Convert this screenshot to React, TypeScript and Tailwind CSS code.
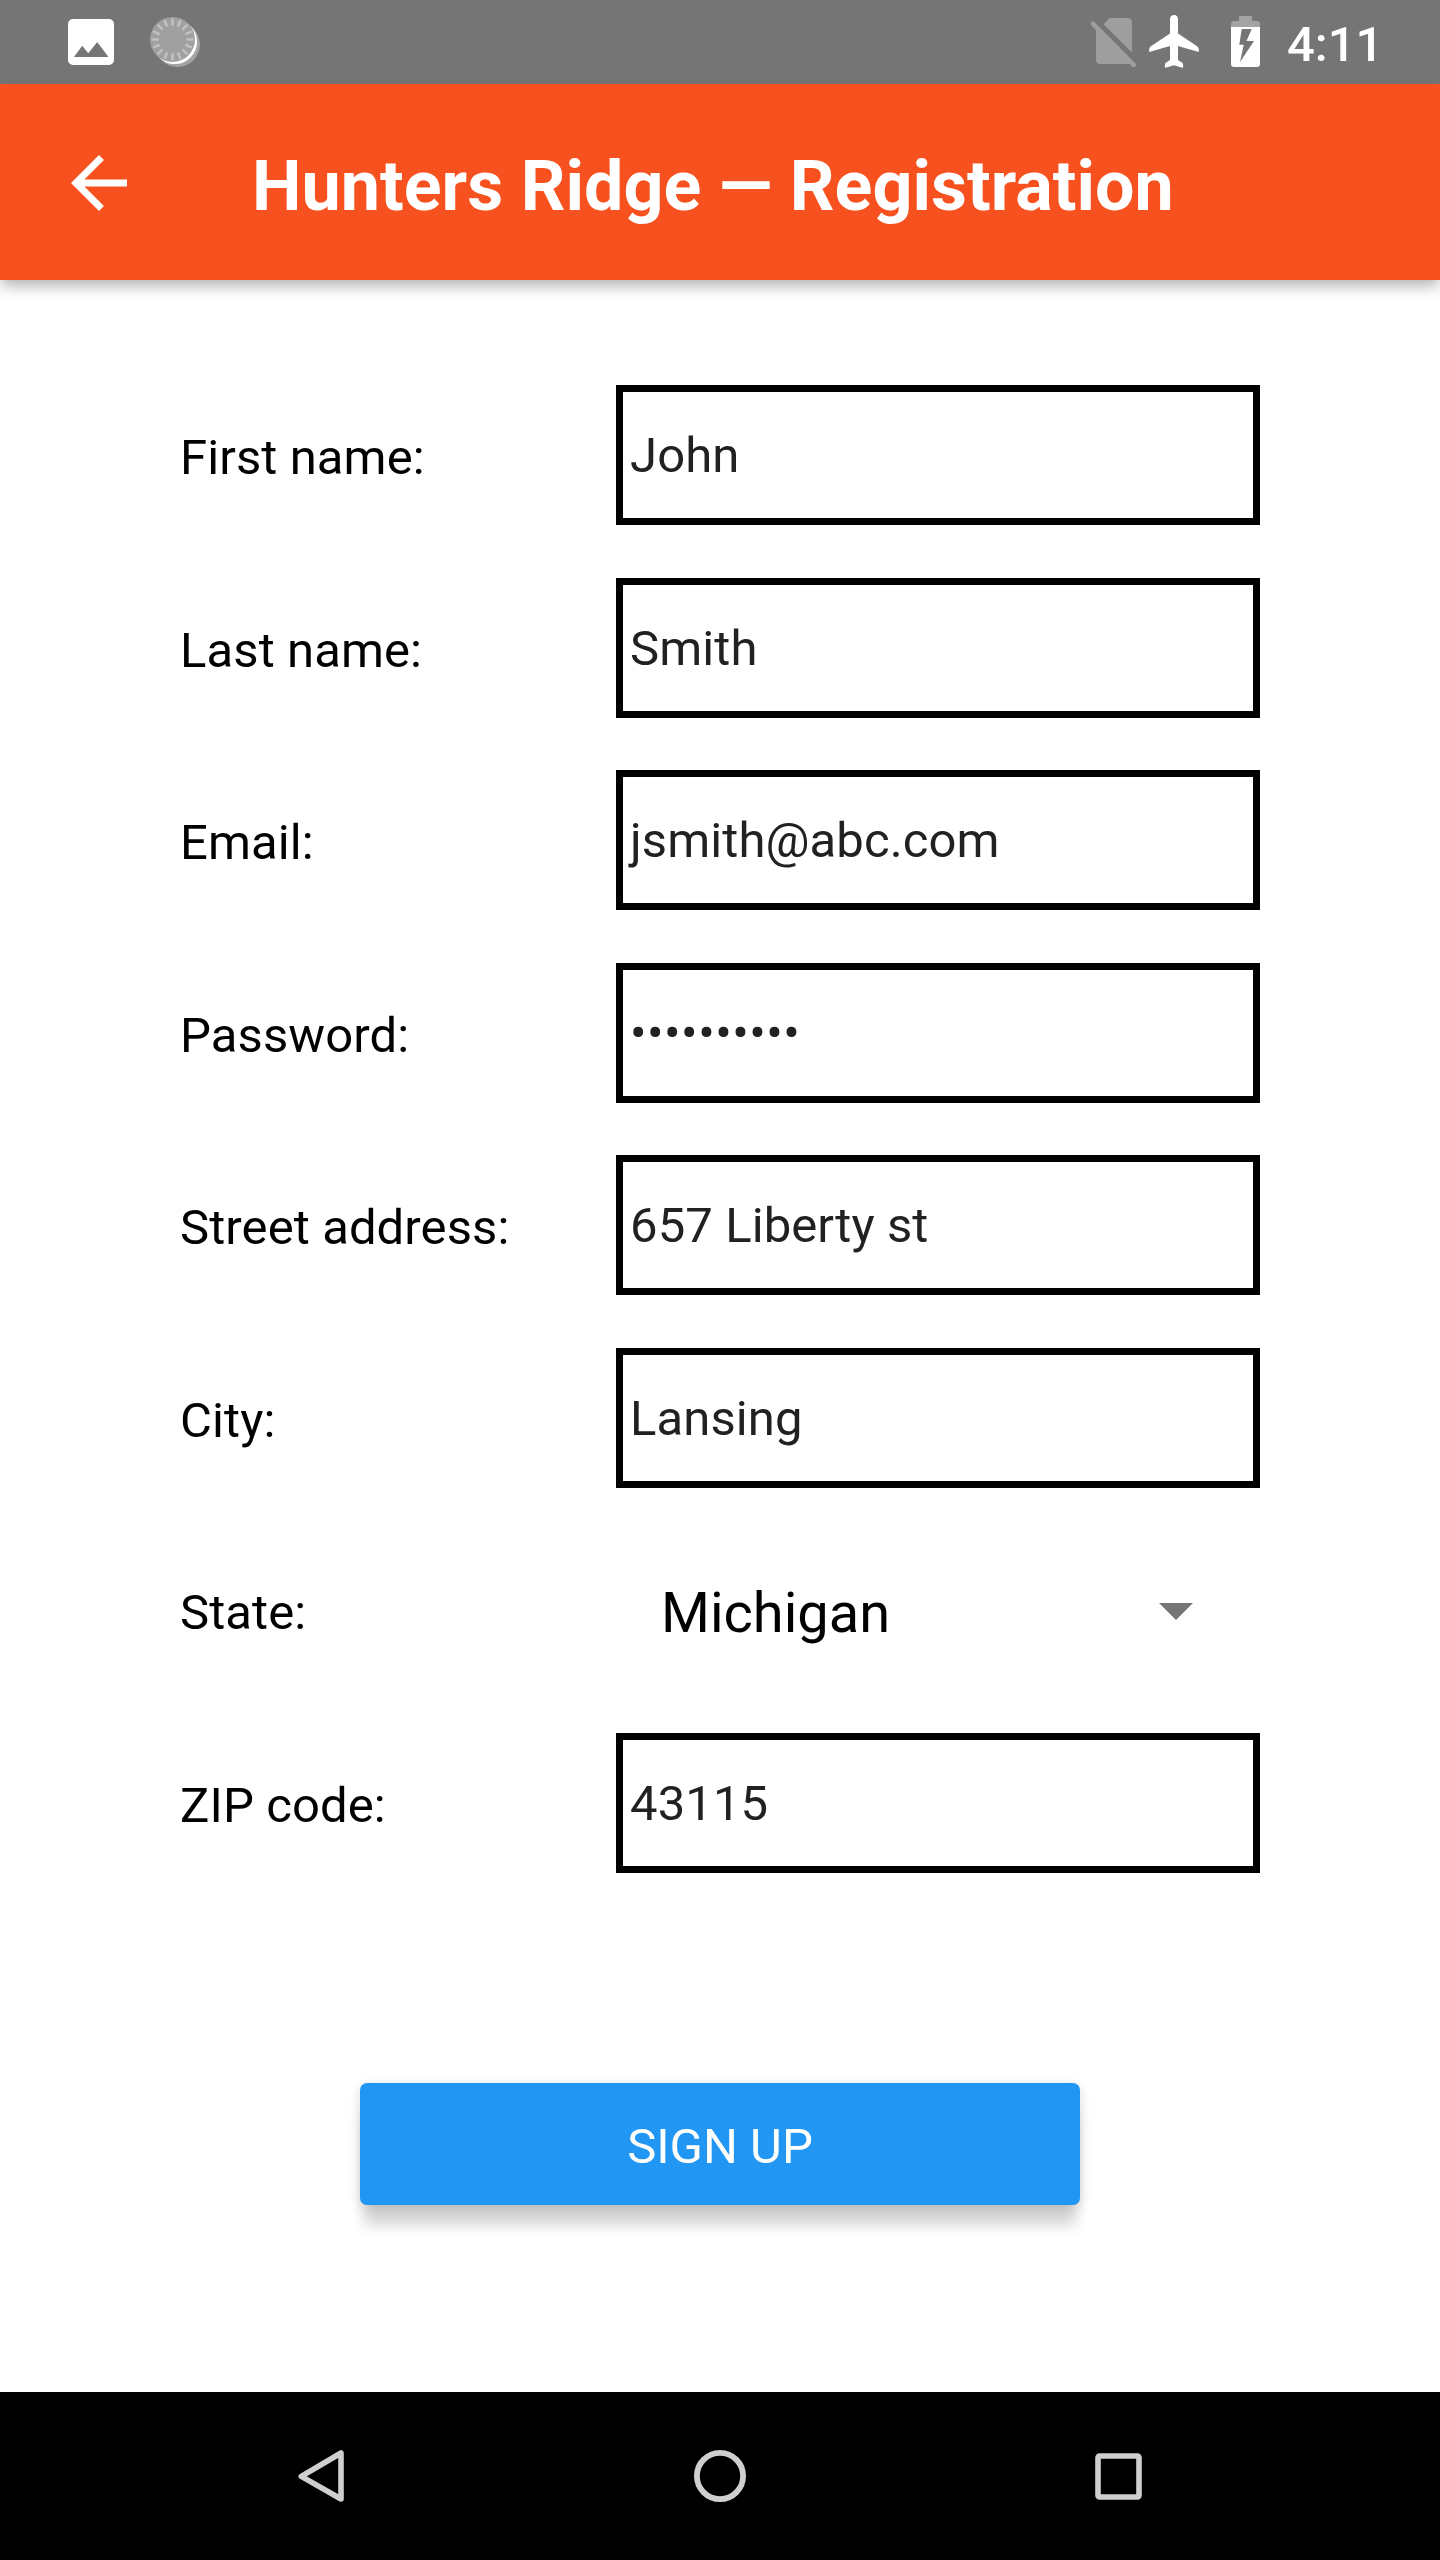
type Field = { label: string; value: string; kind?: 'select' | 'password' };

const fields: Field[] = [
  { label: 'First name:', value: 'John' },
  { label: 'Last name:', value: 'Smith' },
  { label: 'Email:', value: 'jsmith@abc.com' },
  { label: 'Password:', value: '••••••••••', kind: 'password' },
  { label: 'Street address:', value: '657 Liberty st' },
  { label: 'City:', value: 'Lansing' },
  { label: 'State:', value: 'Michigan', kind: 'select' },
  { label: 'ZIP code:', value: '43115' },
];

const spinnerAngles = Array.from({ length: 16 }, (_, i) => i * 22.5);

function StatusBar() {
  return (
    <div className="flex h-[84px] items-center justify-between bg-[#757575] pr-[60px] pl-[68px]">
      <div className="flex items-center">
        <svg className="h-[84px] w-[46px]" viewBox="68 0 46 84">
          <path
            fill="#fff"
            fillRule="evenodd"
            d="M73 19h36a5 5 0 0 1 5 5v36a5 5 0 0 1-5 5H73a5 5 0 0 1-5-5V24a5 5 0 0 1 5-5zM74 57h34.500L97.200 42 88.300 53.300 82.200 45.800z"
          />
        </svg>
        <svg className="ml-9 h-[84px] w-[50px]" viewBox="150 0 50 84">
          <circle cx="177.500" cy="44.500" r="22.500" fill="#a3a3a3" />
          <circle cx="174.800" cy="41.800" r="22.300" fill="#fff" />
          <circle cx="172.500" cy="39.500" r="22.500" fill="#a0a0a0" />
          <g stroke="#c0c0c0" strokeWidth="2.600" strokeLinecap="round">
            {spinnerAngles.map((a) => (
              <line key={a} x1="172.500" y1="19.500" x2="172.500" y2="24.500" transform={`rotate(${a} 172.500 39.500)`} />
            ))}
          </g>
        </svg>
      </div>
      <div className="flex items-center">
        <svg className="h-[84px] w-[46px]" viewBox="1090 0 46 84">
          <g fill="#9e9e9e">
            <path d="M1103.500 24.200 1108 19.400Q1109.300 18 1111 18H1127.500Q1132 18 1132 22.500V52.500Z" />
            <path d="M1096 27.500 1131.500 63Q1130.500 64 1128 64H1100.500Q1096 64 1096 59.500Z" />
          </g>
          <path d="M1093 23.800 1133.700 64.800" stroke="#9e9e9e" strokeWidth="4.600" strokeLinecap="round" />
        </svg>
        <svg className="ml-[13px] h-[84px] w-[50px]" viewBox="1149 0 50 84">
          <path
            fill="#fff"
            d="M1174 15Q1170 15 1170 19.500V33.500L1150.500 46.500Q1149 47.500 1149 51.300Q1149.300 52 1151 51.500L1170 46V60L1165.500 63Q1164.700 63.600 1164.800 67.300Q1165.300 68 1166.500 67.600L1174 65.300 1181.500 67.600Q1182.700 68 1183.200 67.300Q1183.300 63.600 1182.500 63L1178 60V46L1197 51.500Q1198.700 52 1199 51.300Q1199 47.500 1197.500 46.500L1178 33.500V19.500Q1178 15 1174 15Z"
          />
        </svg>
        <svg className="ml-8 h-[84px] w-[29px]" viewBox="1231 0 29 84">
          <path fill="#a3a3a3" d="M1239 16H1252V21H1257Q1260 21 1260 24V27H1231V24Q1231 21 1234 21H1239Z" />
          <path
            fill="#fff"
            fillRule="evenodd"
            d="M1231 27H1260V64Q1260 67 1257 67H1234Q1231 67 1231 64ZM1241.700 29 1239.300 44.800H1243.700L1240 62 1254 41H1246.500L1251.700 29Z"
          />
        </svg>
        <span className="ml-[27px] w-[93px] pt-[5px] text-[49px] leading-[56px] font-medium whitespace-nowrap text-white">4:11</span>
      </div>
    </div>
  );
}

function AppBar() {
  return (
    <header className="flex h-[196px] items-center bg-[#f6511e] pl-[57px] shadow-[0_7px_14px_-1px_rgba(0,0,0,0.3)]">
      <svg className="mt-[2px] size-[84px]" viewBox="0 0 24 24" fill="#fff">
        <path d="M20 11H7.830l5.590-5.590L12 4l-8 8 8 8 1.410-1.410L7.830 13H20v-2z" />
      </svg>
      <h1 className="ml-[111px] pt-2 text-[70px] leading-[80px] font-bold tracking-[0.04px] whitespace-nowrap text-white">Hunters Ridge — Registration</h1>
    </header>
  );
}

function FormRow({ label, value, kind }: Field) {
  return (
    <div className="flex h-[140px] items-center">
      <label className="w-[436px] pt-[6px] text-[49px] leading-[56px] tracking-[0.1px] text-black">{label}</label>
      {kind === 'select' ? (
        <div className="flex h-[140px] w-[644px] items-center justify-between pr-[67px] pl-[45px]">
          <span className="pt-[5px] text-[56px] leading-[64px] text-black">{value}</span>
          <svg className="mt-[3px] h-[17px] w-[34px]" viewBox="0 0 34 17">
            <path fill="#757575" d="M0 0H34L17 17Z" />
          </svg>
        </div>
      ) : (
        <div className="flex h-[140px] w-[644px] items-center border-[7px] border-black pt-[2px] pl-[7px] text-[49px] leading-[56px] text-[#212121]">
          <span className={kind === 'password' ? 'tracking-[0.5px]' : 'tracking-[0.1px]'}>{value}</span>
        </div>
      )}
    </div>
  );
}

function NavBar() {
  return (
    <nav className="flex h-[168px] items-center justify-between bg-black pr-[298px] pl-[298px]">
      <svg className="h-[52px] w-[47px]" viewBox="298 2450 47 52" fill="none" stroke="#cfcfcf" strokeWidth="5.600" strokeLinejoin="round">
        <path d="M341 2453V2499L301.300 2476.400Z" />
      </svg>
      <svg className="size-[52px]" viewBox="0 0 52 52" fill="none" stroke="#cfcfcf" strokeWidth="5.800">
        <circle cx="26" cy="26" r="23.100" />
      </svg>
      <svg className="size-[47px]" viewBox="0 0 47 47" fill="none" stroke="#cfcfcf" strokeWidth="5.600">
        <rect x="3" y="3" width="41" height="41" rx="1.500" />
      </svg>
    </nav>
  );
}

export default function App() {
  return (
    <div className="flex h-[2560px] w-[1440px] flex-col overflow-hidden bg-white font-['Roboto',sans-serif]">
      <StatusBar />
      <AppBar />
      <main className="flex flex-1 flex-col items-center pt-[105px]">
        <div className="flex w-[1080px] flex-col gap-[52.5px]">
          {fields.map((field) => (
            <FormRow key={field.label} {...field} />
          ))}
        </div>
        <button className="mt-[210.5px] h-[122px] w-[720px] rounded-[7px] bg-[#2196f3] pt-[6px] text-[49px] leading-[56px] text-white shadow-[0_24px_14px_-4px_rgba(0,0,0,0.17),0_3px_12px_rgba(0,0,0,0.14)]">
          SIGN UP
        </button>
      </main>
      <NavBar />
    </div>
  );
}
